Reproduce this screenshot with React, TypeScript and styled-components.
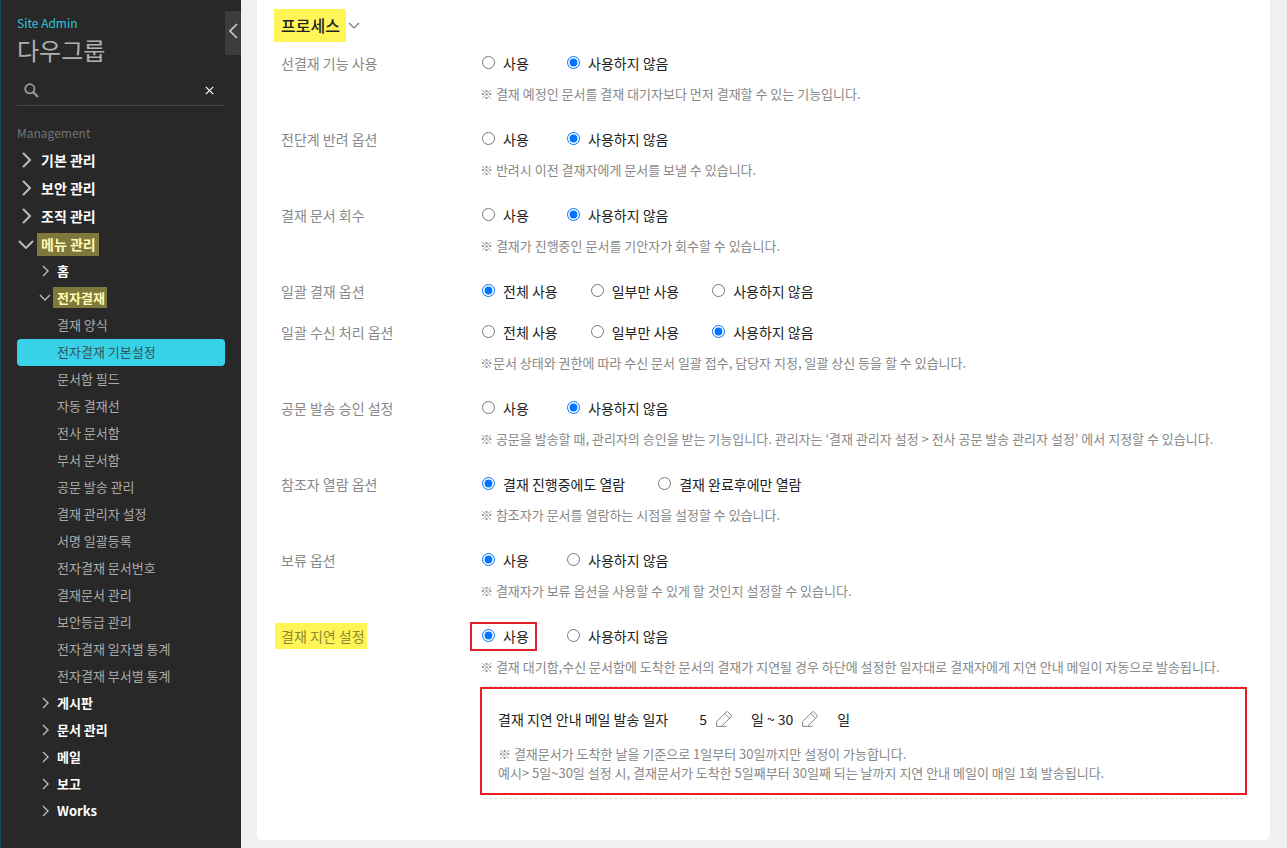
import React from "react";
import styled, { createGlobalStyle, css } from "styled-components";

const GlobalStyle = createGlobalStyle`
  *, *::before, *::after { box-sizing: border-box; }
  body {
    margin: 0;
    background: #f0f0f0;
    color: #222;
    font-family: "Noto Sans CJK KR", sans-serif;
    font-size: 14px;
    line-height: 24px;
  }
  h1, h2, p, ul { margin: 0; padding: 0; font-weight: 400; }
  ul { list-style: none; }
  a { color: inherit; text-decoration: none; }
  button { border: 0; padding: 0; background: none; font: inherit; color: inherit; cursor: pointer; }
`;

const Layout = styled.div`
  display: grid;
  grid-template-columns: 241px minmax(0, 1fr);
  min-height: 100vh;
`;

const Sidebar = styled.aside`
  position: relative;
  padding: 12px 16px 0;
  border-left: 1px solid #174f59;
  background: #282828;
  color: #aaa;
`;

const CollapseButton = styled.button`
  position: absolute;
  top: 11px;
  right: 0;
  display: flex;
  align-items: center;
  justify-content: center;
  width: 16px;
  height: 44px;
  padding-bottom: 4px;
  background: #3d3d3d;
  color: #ccc;
`;

const SiteLink = styled.a`
  display: block;
  height: 22px;
  color: #2cc7dd;
  font-size: 12px;
  line-height: 22px;
`;

const GroupName = styled.h1`
  color: #b0b0b0;
  font-size: 24px;
  line-height: 32px;
`;

const SearchForm = styled.form`
  display: flex;
  align-items: center;
  height: 30px;
  margin-top: 10px;
  padding: 0 11px 0 7px;
  border-bottom: 1px solid #484848;
`;

const SearchInput = styled.input`
  flex: 1;
  min-width: 0;
  margin-left: 8px;
  border: 0;
  outline: 0;
  background: transparent;
  color: #fff;
  font: inherit;
`;

const IconButton = styled.button`
  display: inline-flex;
  align-items: center;
  justify-content: center;
`;

const MenuTitle = styled.h2`
  margin: 16px 0 2px;
  color: #747474;
  font-size: 12px;
  line-height: 22px;
`;

const topRow = css`
  height: 28px;
  padding-left: 4px;
  font-size: 14px;
`;

const subRow = css`
  height: 27px;
  padding: 0 0 2px 23px;
  font-size: 13px;
`;

const MenuLink = styled.a<{ $top?: boolean }>`
  display: flex;
  align-items: center;
  ${(p) => (p.$top ? topRow : subRow)}
  color: #fff;
  font-weight: 700;
`;

const MenuIcon = styled.span<{ $top?: boolean }>`
  display: flex;
  justify-content: center;
  width: 10px;
  margin-right: ${(p) => (p.$top ? 10 : 7)}px;
  color: #bbb;

  svg { flex: none; }
`;

const MenuText = styled.span<{ $marked?: boolean; $top?: boolean }>`
  ${(p) =>
    p.$marked &&
    css`
      margin: 0 -4px;
      padding: 0 ${p.$top ? 3 : 2}px 0 4px;
      background: #7e783c;
      color: #fffbb5;
      line-height: ${p.$top ? 23 : 21}px;
    `}
`;

const LeafLink = styled.a<{ $active?: boolean }>`
  display: block;
  padding: 0 0 2px 40px;
  border-radius: 4px;
  background: ${(p) => (p.$active ? "#37d2e8" : "transparent")};
  color: ${(p) => (p.$active ? "#35545a" : "#aaa")};
  font-size: 13px;
  line-height: 25px;
`;

const Main = styled.main`
  padding: 0 17px 8px 16px;
`;

const Panel = styled.section`
  padding: 9px 23px 24px 24px;
  border-radius: 0 0 5px 5px;
  background: #fff;
`;

const SectionHead = styled.div`
  display: flex;
  align-items: center;
  gap: 2px;
  margin: 0 0 9px -7px;
`;

const SectionTitle = styled.h2`
  padding: 0 6px 0 7px;
  background: #fff557;
  color: #222;
  font-size: 16px;
  font-weight: 500;
  line-height: 33px;
`;

const SectionToggle = styled(IconButton)`
  color: #777;
`;

const SettingRow = styled.div`
  display: grid;
  grid-template-columns: 199px minmax(0, 1fr);
  padding-bottom: 17px;
`;

const RowLabel = styled.div`
  color: #888;
`;

const Mark = styled.span`
  display: inline-block;
  margin: -2px -6px 0;
  padding: 0 2px 0 6px;
  background: #fff557;
  color: #8e8930;
  line-height: 26px;
`;

const Options = styled.div`
  display: flex;
  flex-wrap: wrap;
  column-gap: 33px;
  padding-left: 2px;
`;

const Option = styled.label<{ $boxed?: boolean }>`
  position: relative;
  display: flex;
  align-items: center;
  gap: 8px;
  min-width: 52px;
  cursor: pointer;

  input { width: 13px; height: 13px; margin: 0 0 2px; }

  ${(p) =>
    p.$boxed &&
    css`
      &::after {
        content: "";
        position: absolute;
        inset: -2px -3px -3px -12px;
        border: 2px solid #e02128;
      }
    `}
`;

const Hint = styled.p`
  margin-top: 7px;
  padding-bottom: 4px;
  color: #888;
  font-size: 13px;
`;

const DelayBox = styled.div`
  position: relative;
  margin-top: 3px;
  padding: 20px 17px 16px;
  border: 1px dashed #ddd;
  border-radius: 4px;

  &::after {
    content: "";
    position: absolute;
    inset: 0 -1px 3px -1px;
    border: 2px solid #ec1c24;
    pointer-events: none;
  }
`;

const DelayLine = styled.div`
  display: flex;
  align-items: center;
  margin-bottom: 13px;
`;

const DelayTitle = styled.span`
  margin-right: 31px;
`;

const DayField = styled.span`
  display: inline-flex;
  align-items: center;
  gap: 9px;
  margin-right: 19px;
`;

const Separator = styled.span`
  margin: 0 3px;
`;

const DelayNote = styled.p`
  color: #888;
  font-size: 13px;
  line-height: 19px;
`;

function Chevron({ dir, size, width = 1 }: { dir: "left" | "right" | "down"; size: number; width?: number }) {
  const s = size;
  const points = {
    right: [0, 0, s, s, 0, 2 * s],
    left: [s, 0, 0, s, s, 2 * s],
    down: [0, 0, s, s, 2 * s, 0],
  }[dir];
  const w = (dir === "down" ? 2 * s : s) + 2;
  const h = (dir === "down" ? s : 2 * s) + 2;
  return (
    <svg width={w} height={h} viewBox={`-1 -1 ${w} ${h}`} fill="none" stroke="currentColor" strokeWidth={width} aria-hidden>
      <polyline points={points.join(" ")} />
    </svg>
  );
}

function SearchIcon() {
  return (
    <svg width="15" height="15" viewBox="0 0 15 15" fill="none" stroke="#999" aria-hidden>
      <circle cx="5.8" cy="5.8" r="4.6" strokeWidth="1.8" />
      <path d="M9 9 L14 14" strokeWidth="2.2" />
    </svg>
  );
}

function PencilIcon() {
  return (
    <svg width="16" height="16" viewBox="0 0 16 16" fill="none" stroke="#888" aria-hidden>
      <path d="M.6 15.4 V10.5 L10.2 1 Q11 .2 11.8 1 L15 4.2 Q15.8 5 15 5.8 L5.5 15.4 Z" />
      <path d="M8.8 2.5 L13.5 7.2 M5.5 15.4 H10.5" />
    </svg>
  );
}

type Item = { name: string; marked?: boolean; open?: boolean };

const topItems: Item[] = [
  { name: "기본 관리" },
  { name: "보안 관리" },
  { name: "조직 관리" },
  { name: "메뉴 관리", marked: true, open: true },
];

const approvalPages = [
  "결재 양식",
  "전자결재 기본설정",
  "문서함 필드",
  "자동 결재선",
  "전사 문서함",
  "부서 문서함",
  "공문 발송 관리",
  "결재 관리자 설정",
  "서명 일괄등록",
  "전자결재 문서번호",
  "결재문서 관리",
  "보안등급 관리",
  "전자결재 일자별 통계",
  "전자결재 부서별 통계",
];

const laterItems = ["게시판", "문서 관리", "메일", "보고", "Works"];

function MenuEntry({ item, top }: { item: Item; top?: boolean }) {
  return (
    <MenuLink href="#" $top={top}>
      <MenuIcon $top={top}>
        <Chevron dir={item.open ? "down" : "right"} size={top ? 7 : 5} width={top ? 2 : 1.4} />
      </MenuIcon>
      <MenuText $marked={item.marked} $top={top}>{item.name}</MenuText>
    </MenuLink>
  );
}

type SettingData = {
  id: string;
  label: string;
  options: string[];
  checked: number;
  hint?: string;
};

const useOrNot = ["사용", "사용하지 않음"];
const useScope = ["전체 사용", "일부만 사용", "사용하지 않음"];

const settings: SettingData[] = [
  { id: "pre", label: "선결재 기능 사용", options: useOrNot, checked: 1, hint: "※ 결재 예정인 문서를 결재 대기자보다 먼저 결재할 수 있는 기능입니다." },
  { id: "return", label: "전단계 반려 옵션", options: useOrNot, checked: 1, hint: "※ 반려시 이전 결재자에게 문서를 보낼 수 있습니다." },
  { id: "withdraw", label: "결재 문서 회수", options: useOrNot, checked: 1, hint: "※ 결재가 진행중인 문서를 기안자가 회수할 수 있습니다." },
  { id: "bulk", label: "일괄 결재 옵션", options: useScope, checked: 0 },
  { id: "receive", label: "일괄 수신 처리 옵션", options: useScope, checked: 2, hint: "※문서 상태와 권한에 따라 수신 문서 일괄 접수, 담당자 지정, 일괄 상신 등을 할 수 있습니다." },
  { id: "official", label: "공문 발송 승인 설정", options: useOrNot, checked: 1, hint: "※ 공문을 발송할 때, 관리자의 승인을 받는 기능입니다. 관리자는 ‘결재 관리자 설정 > 전사 공문 발송 관리자 설정’ 에서 지정할 수 있습니다." },
  { id: "reader", label: "참조자 열람 옵션", options: ["결재 진행중에도 열람", "결재 완료후에만 열람"], checked: 0, hint: "※ 참조자가 문서를 열람하는 시점을 설정할 수 있습니다." },
  { id: "hold", label: "보류 옵션", options: useOrNot, checked: 0, hint: "※ 결재자가 보류 옵션을 사용할 수 있게 할 것인지 설정할 수 있습니다." },
];

const delaySetting: SettingData = {
  id: "delay",
  label: "결재 지연 설정",
  options: useOrNot,
  checked: 0,
  hint: "※ 결재 대기함,수신 문서함에 도착한 문서의 결재가 지연될 경우 하단에 설정한 일자대로 결재자에게 지연 안내 메일이 자동으로 발송됩니다.",
};

function Setting({ setting, marked, children }: { setting: SettingData; marked?: boolean; children?: React.ReactNode }) {
  const labelId = `${setting.id}-label`;
  return (
    <SettingRow>
      <RowLabel id={labelId}>{marked ? <Mark>{setting.label}</Mark> : setting.label}</RowLabel>
      <div>
        <Options role="radiogroup" aria-labelledby={labelId}>
          {setting.options.map((text, i) => (
            <Option key={text} $boxed={marked && i === 0}>
              <input type="radio" name={setting.id} defaultChecked={i === setting.checked} />
              <span>{text}</span>
            </Option>
          ))}
        </Options>
        {setting.hint && <Hint>{setting.hint}</Hint>}
        {children}
      </div>
    </SettingRow>
  );
}

function Day({ value, label }: { value: number; label: string }) {
  return (
    <DayField>
      {value}
      <IconButton type="button" aria-label={label}>
        <PencilIcon />
      </IconButton>
    </DayField>
  );
}

export default function App() {
  return (
    <Layout>
      <GlobalStyle />
      <Sidebar>
        <CollapseButton type="button" aria-label="메뉴 접기">
          <Chevron dir="left" size={7} width={1.6} />
        </CollapseButton>
        <SiteLink href="#">Site Admin</SiteLink>
        <GroupName>다우그룹</GroupName>
        <SearchForm role="search">
          <SearchIcon />
          <SearchInput type="text" aria-label="메뉴 검색" />
          <IconButton type="button" aria-label="지우기">
            <svg width="9" height="9" viewBox="0 0 9 9" stroke="#fff" strokeWidth="1.2" aria-hidden>
              <path d="M.8 .8 L8.2 8.2 M8.2 .8 L.8 8.2" />
            </svg>
          </IconButton>
        </SearchForm>
        <MenuTitle>Management</MenuTitle>
        <nav>
          <ul>
            {topItems.map((item) => (
              <li key={item.name}>
                <MenuEntry item={item} top />
              </li>
            ))}
            <li>
              <MenuEntry item={{ name: "홈" }} />
            </li>
            <li>
              <MenuEntry item={{ name: "전자결재", marked: true, open: true }} />
              <ul>
                {approvalPages.map((name) => (
                  <li key={name}>
                    <LeafLink href="#" $active={name === "전자결재 기본설정"}>
                      {name}
                    </LeafLink>
                  </li>
                ))}
              </ul>
            </li>
            {laterItems.map((name) => (
              <li key={name}>
                <MenuEntry item={{ name }} />
              </li>
            ))}
          </ul>
        </nav>
      </Sidebar>
      <Main>
        <Panel>
          <SectionHead>
            <SectionTitle>프로세스</SectionTitle>
            <SectionToggle type="button" aria-label="프로세스 접기">
              <Chevron dir="down" size={5} width={1.2} />
            </SectionToggle>
          </SectionHead>
          {settings.map((s) => (
            <Setting key={s.id} setting={s} />
          ))}
          <Setting setting={delaySetting} marked>
            <DelayBox>
              <DelayLine>
                <DelayTitle>결재 지연 안내 메일 발송 일자</DelayTitle>
                <Day value={5} label="시작일 수정" />
                일<Separator>~</Separator>
                <Day value={30} label="종료일 수정" />일
              </DelayLine>
              <DelayNote>※ 결재문서가 도착한 날을 기준으로 1일부터 30일까지만 설정이 가능합니다.</DelayNote>
              <DelayNote>예시&gt; 5일~30일 설정 시, 결재문서가 도착한 5일째부터 30일째 되는 날까지 지연 안내 메일이 매일 1회 발송됩니다.</DelayNote>
            </DelayBox>
          </Setting>
        </Panel>
      </Main>
    </Layout>
  );
}
